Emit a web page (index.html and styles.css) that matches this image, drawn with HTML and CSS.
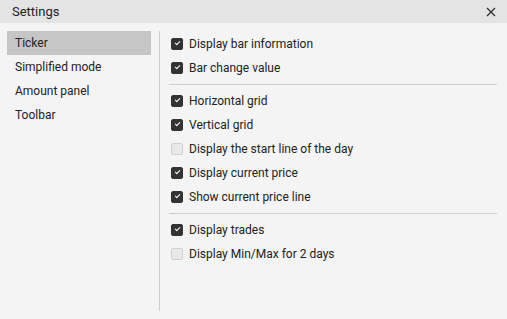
FILE: index.html
```html
<!DOCTYPE html>
<html>
<head>
<meta charset="utf-8">
<link rel="stylesheet" href="styles.css">
</head>
<body>
<div class="dialog">
  <div class="header">
    <span class="title">Settings</span>
    <svg class="close" width="10" height="10" viewBox="0 0 10 10"><path d="M1 1L9 9M9 1L1 9" stroke="#333" stroke-width="1.4"/></svg>
  </div>
  <div class="main">
    <nav class="sidebar">
      <div class="nav-item active">Ticker</div>
      <div class="nav-item">Simplified mode</div>
      <div class="nav-item">Amount panel</div>
      <div class="nav-item">Toolbar</div>
    </nav>
    <div class="vline"></div>
    <div class="content">
      <div class="row"><span class="cb on"></span>Display bar information</div>
      <div class="row"><span class="cb on"></span>Bar change value</div>
      <div class="sep"></div>
      <div class="row"><span class="cb on"></span>Horizontal grid</div>
      <div class="row"><span class="cb on"></span>Vertical grid</div>
      <div class="row"><span class="cb"></span>Display the start line of the day</div>
      <div class="row"><span class="cb on"></span>Display current price</div>
      <div class="row"><span class="cb on"></span>Show current price line</div>
      <div class="sep"></div>
      <div class="row"><span class="cb on"></span>Display trades</div>
      <div class="row"><span class="cb"></span>Display Min/Max for 2 days</div>
    </div>
  </div>
</div>
</body>
</html>
```
FILE: styles.css
```css
html, body {
  margin: 0;
  padding: 0;
  background: #f4f4f4;
}
body {
  font-family: Roboto, "Liberation Sans", sans-serif;
  font-size: 12px;
  color: #222;
}
.dialog {
  width: 507px;
  height: 319px;
  display: flex;
  flex-direction: column;
}
.header {
  height: 23px;
  background: #e4e4e4;
  display: flex;
  align-items: center;
  justify-content: space-between;
  padding: 0 11px 0 12px;
}
.title {
  font-size: 13px;
  color: #222;
}
.close {
  display: block;
}
.main {
  flex: 1;
  display: flex;
  padding: 8px 10px 8px 7px;
}
.sidebar {
  width: 144px;
  display: flex;
  flex-direction: column;
}
.nav-item {
  height: 24px;
  line-height: 24px;
  padding-left: 8px;
  color: #222;
}
.nav-item.active {
  background: #c6c6c6;
}
.vline {
  width: 1px;
  background: #cdcdcd;
  margin-left: 8px;
}
.content {
  flex: 1;
  padding: 1px 0 0 9px;
  display: flex;
  flex-direction: column;
}
.row {
  height: 24px;
  display: flex;
  align-items: center;
  padding-left: 2px;
}
.sep {
  height: 1px;
  background: #cdcdcd;
  margin: 4px 0;
}
.cb {
  width: 12px;
  height: 12px;
  box-sizing: border-box;
  border-radius: 2px;
  margin-right: 6px;
  background: #e9e9e9;
  border: 1px solid #cfcfcf;
  position: relative;
}
.cb.on {
  background: #333;
  border-color: #333;
}
.cb.on::after {
  content: "";
  position: absolute;
  left: 3px;
  top: 2px;
  width: 4px;
  height: 2px;
  border-left: 1.3px solid #fff;
  border-bottom: 1.3px solid #fff;
  transform: rotate(-45deg);
}
```
